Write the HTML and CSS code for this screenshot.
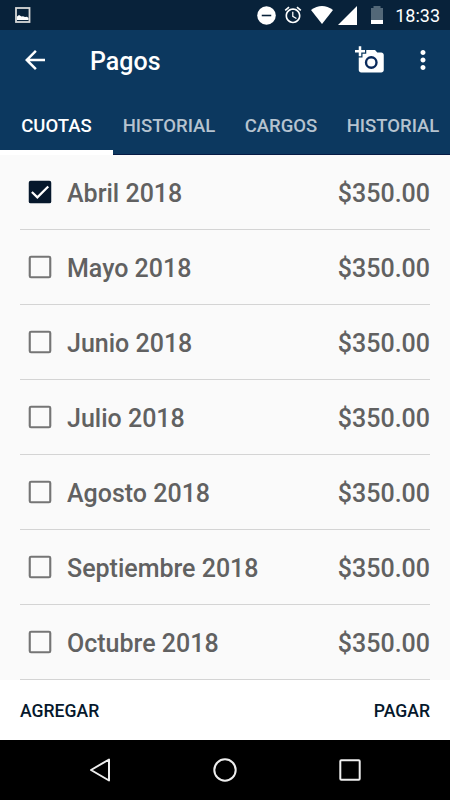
FILE: index.html
```html
<!DOCTYPE html>
<html lang="es">
<head>
    <meta charset="utf-8">
    <title>Pagos</title>
    <link rel="stylesheet" href="styles.css">
</head>
<body>
    <div class="status-bar">
        <svg class="picture" width="16" height="16" viewBox="0 0 16 16">
            <rect x="1" y="1" width="13.500" height="14" fill="none" stroke="#d8d8d8" stroke-width="1.8"/>
            <path d="M2 13V9.500L4 8l2.500 1.500L8 9.200l2 .8 2-.3 1.500 1.300v2z" fill="#fff"/>
        </svg>
        <div class="status-icons">
            <svg width="19" height="19" viewBox="0 0 18 18"><circle cx="9" cy="9" r="8.800" fill="#fff"/><path d="M4.500 9h9" stroke="#08223a" stroke-width="1.500"/></svg>
            <svg class="alarm" width="20" height="20" viewBox="0 0 24 24"><path fill="#fff" d="M22 5.720l-4.600-3.860-1.290 1.530 4.600 3.860L22 5.720zM7.880 3.390L6.600 1.860 2 5.710l1.290 1.530 4.590-3.850zM12.500 8H11v6l4.750 2.850.75-1.230-4-2.370V8zM12 4c-4.970 0-9 4.030-9 9s4.020 9 9 9c4.970 0 9-4.030 9-9s-4.030-9-9-9zm0 16c-3.870 0-7-3.130-7-7s3.130-7 7-7 7 3.130 7 7-3.130 7-7 7z"/></svg>
            <svg class="wifi" width="22" height="18" viewBox="0 0 22 18"><path fill="#fff" d="M0 4Q11-4 22 4L11 18z"/></svg>
            <svg class="signal" width="19" height="19" viewBox="0 0 19 19"><path fill="#fff" d="M19 0v19H0z"/></svg>
            <svg class="battery" width="12" height="18" viewBox="0 0 12 18"><path fill="#536878" d="M2.500 0h7v2H12v12H0V2h2.500z"/><path fill="#fff" d="M0 14h12v4H0z"/></svg>
            <span class="clock">18:33</span>
        </div>
    </div>

    <div class="toolbar">
        <svg width="30" height="30" viewBox="0 0 24 24"><path fill="#fff" d="M20 11H7.830l5.590-5.590L12 4l-8 8 8 8 1.410-1.410L7.830 13H20v-2z"/></svg>
        <h1 class="title">Pagos</h1>
        <svg width="30" height="30" viewBox="0 0 24 24"><path fill="#fff" d="M3 4V1h2v3h3v2H5v3H3V6H0V4h3zm3 6V7h3V4h7l1.830 2H21c1.100 0 2 .9 2 2v12c0 1.100-.9 2-2 2H5c-1.100 0-2-.9-2-2V10h3z"/><circle cx="13" cy="14" r="4.200" fill="none" stroke="#0a2a5c" stroke-width="1.900"/></svg>
        <svg class="more" width="30" height="30" viewBox="0 0 24 24"><path fill="#fff" d="M12 8c1.100 0 2-.9 2-2s-.9-2-2-2-2 .9-2 2 .9 2 2 2zm0 2c-1.100 0-2 .9-2 2s.9 2 2 2 2-.9 2-2-.9-2-2-2zm0 6c-1.100 0-2 .9-2 2s.9 2 2 2 2-.9 2-2-.9-2-2-2z"/></svg>
    </div>

    <div class="tabs">
        <div class="tab active">CUOTAS</div>
        <div class="tab">HISTORIAL</div>
        <div class="tab">CARGOS</div>
        <div class="tab">HISTORIAL</div>
    </div>

    <div class="list">
        <div class="row">
            <svg class="check" viewBox="0 0 24 24"><rect x="3" y="3" width="18" height="18" rx="1.500" fill="#06182c"/><path d="M5.500 12l4.400 4.300L18.600 7.600" fill="none" stroke="#fff" stroke-width="1.800"/></svg>
            <span class="month">Abril 2018</span>
            <span class="amount">$350.00</span>
        </div>
        <div class="row">
            <svg class="check" viewBox="0 0 24 24"><rect x="3.800" y="3.800" width="16.400" height="16.400" rx="1"/></svg>
            <span class="month">Mayo 2018</span>
            <span class="amount">$350.00</span>
        </div>
        <div class="row">
            <svg class="check" viewBox="0 0 24 24"><rect x="3.800" y="3.800" width="16.400" height="16.400" rx="1"/></svg>
            <span class="month">Junio 2018</span>
            <span class="amount">$350.00</span>
        </div>
        <div class="row">
            <svg class="check" viewBox="0 0 24 24"><rect x="3.800" y="3.800" width="16.400" height="16.400" rx="1"/></svg>
            <span class="month">Julio 2018</span>
            <span class="amount">$350.00</span>
        </div>
        <div class="row">
            <svg class="check" viewBox="0 0 24 24"><rect x="3.800" y="3.800" width="16.400" height="16.400" rx="1"/></svg>
            <span class="month">Agosto 2018</span>
            <span class="amount">$350.00</span>
        </div>
        <div class="row">
            <svg class="check" viewBox="0 0 24 24"><rect x="3.800" y="3.800" width="16.400" height="16.400" rx="1"/></svg>
            <span class="month">Septiembre 2018</span>
            <span class="amount">$350.00</span>
        </div>
        <div class="row">
            <svg class="check" viewBox="0 0 24 24"><rect x="3.800" y="3.800" width="16.400" height="16.400" rx="1"/></svg>
            <span class="month">Octubre 2018</span>
            <span class="amount">$350.00</span>
        </div>
    </div>

    <div class="actions">
        <span>AGREGAR</span>
        <span>PAGAR</span>
    </div>

    <div class="nav-bar">
        <svg width="26" height="26" viewBox="0 0 26 26"><path d="M22 2.500v21L4 13z"/></svg>
        <svg width="26" height="26" viewBox="0 0 26 26"><circle cx="13" cy="13" r="10.700"/></svg>
        <svg width="26" height="26" viewBox="0 0 26 26"><rect x="3.300" y="3.300" width="19.400" height="19.400" rx="1"/></svg>
    </div>
</body>
</html>
```
FILE: styles.css
```css
* {
    box-sizing: border-box;
}

body {
    margin: 0;
    width: 450px;
    height: 800px;
    overflow: hidden;
    font-family: Roboto, sans-serif;
    font-weight: 500;
    background-color: #fafafa;
}

svg {
    display: block;
    flex: none;
}

.status-bar {
    display: flex;
    justify-content: space-between;
    height: 30px;
    padding: 0 10px 0 15px;
    background-color: #08223a;
}

.picture {
    margin-top: 7px;
}

.status-icons {
    display: flex;
    align-items: center;
}

.alarm {
    margin-left: 7px;
}

.wifi {
    margin-left: 8px;
}

.signal {
    margin-left: 5px;
}

.battery {
    margin-left: 14px;
}

.clock {
    width: 45px;
    margin-left: 12px;
    padding-top: 1px;
    font-size: 18px;
    font-weight: 400;
    line-height: 30px;
    text-align: right;
    color: #fff;
}

.toolbar {
    display: flex;
    align-items: center;
    height: 62px;
    padding: 0 12px 2px 20px;
    background-color: #0c385f;
}

.title {
    flex: 1;
    margin: 0 0 0 40px;
    padding-top: 3px;
    font-size: 25px;
    font-weight: 500;
    line-height: 30px;
    color: #fff;
}

.more {
    margin-left: 23px;
}

.tabs {
    display: flex;
    height: 63px;
    background-color: #0c385f;
    border-bottom: 1px solid #061b45;
}

.tab {
    flex: none;
    width: 112px;
    height: 63px;
    padding-top: 4px;
    font-size: 18.500px;
    line-height: 60px;
    text-align: center;
    color: #b6c3cf;
}

.active {
    width: 113px;
    color: #fff;
    border-bottom: 5px solid #fff;
}

.list {
    padding: 0 20px;
}

.row {
    display: flex;
    align-items: center;
    height: 75px;
    border-bottom: 1px solid #d4d4d4;
    font-size: 25px;
    color: #616161;
}

.check {
    width: 30px;
    height: 30px;
    margin: 0 12px 0 5px;
}

.check rect:only-child {
    fill: none;
    stroke: #757575;
    stroke-width: 1.700;
}

.month,
.amount {
    padding-top: 2px;
}

.month {
    flex: 1;
}

.actions {
    display: flex;
    justify-content: space-between;
    height: 60px;
    padding: 0 20px;
    font-size: 17.600px;
    line-height: 62px;
    color: #06182c;
    background-color: #fff;
}

.nav-bar {
    display: flex;
    justify-content: center;
    align-items: center;
    gap: 99px;
    height: 60px;
    background-color: #000;
}

.nav-bar svg {
    fill: none;
    stroke: #eee;
    stroke-width: 2;
    stroke-linejoin: round;
}
```
